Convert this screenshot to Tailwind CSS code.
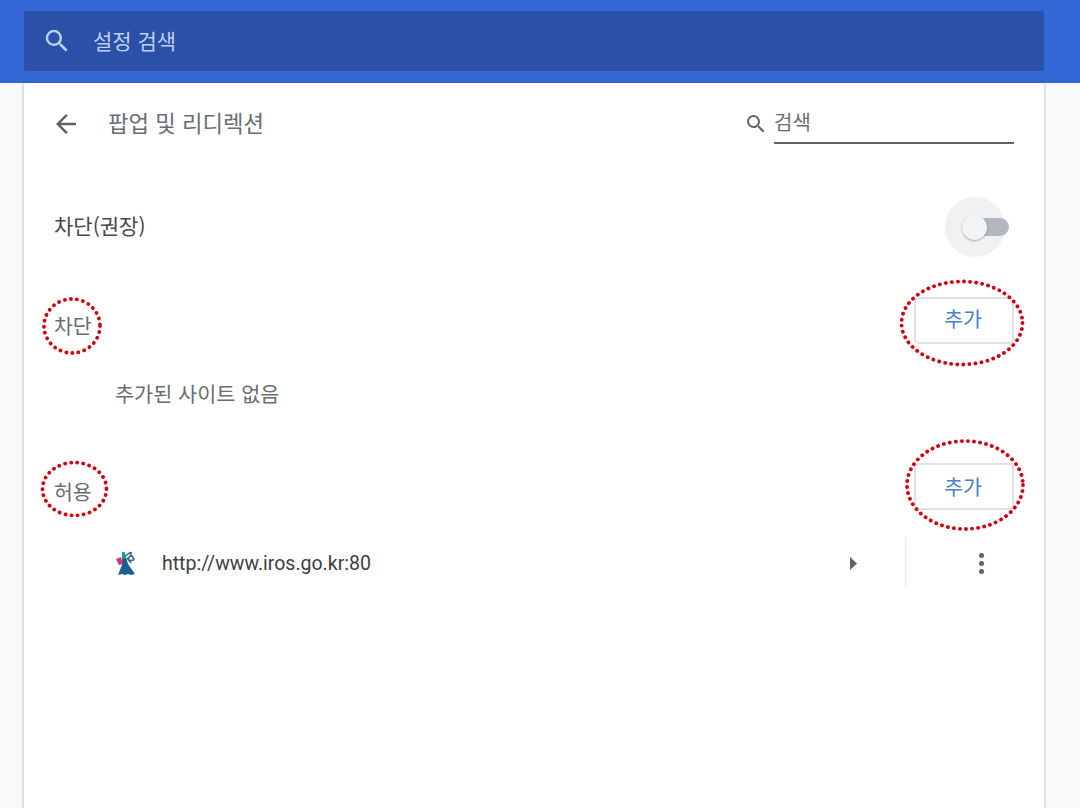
<!DOCTYPE html>
<html lang="ko">
<head>
    <meta charset="UTF-8">
    <title>팝업 및 리디렉션</title>
    <script src="https://cdn.jsdelivr.net/npm/@tailwindcss/browser@4"></script>
</head>
<body class="relative h-[808px] w-[1080px] overflow-hidden bg-[#f8f9fa] font-['Noto_Sans_CJK_KR','Roboto',sans-serif] text-[#696d72]">
    <!-- top bar -->
    <header class="h-[83px] bg-[#3367d6] pt-[11px] pr-9 pl-6">
        <div class="flex h-[60px] items-center rounded-[3px] bg-[#2a50a7] pl-[18px]">
            <svg class="h-[30px] w-[30px] fill-[#bed0f2]" viewBox="0 0 24 24"><path d="M15.5 14h-.79l-.28-.27A6.47 6.47 0 0 0 16 9.5 6.5 6.5 0 1 0 9.5 16c1.61 0 3.09-.59 4.23-1.57l.27.28v.79l5 4.99L20.49 19l-4.99-5zm-6 0C7.01 14 5 11.99 5 9.5S7.01 5 9.5 5 14 7.01 14 9.5 11.99 14 9.5 14z"/></svg>
            <span class="mb-[2px] ml-[21px] text-[21px] leading-none text-[#bed0f2]">설정 검색</span>
        </div>
    </header>

    <!-- settings card -->
    <main class="mr-9 ml-6 h-[725px] bg-white px-[30px] shadow-[0_0_3px_rgba(60,64,67,0.45)]">
        <div class="flex h-[82px] items-center">
            <svg class="-ml-[3px] h-[30px] w-[30px] fill-[#5f6368]" viewBox="0 0 24 24"><path d="M20 11H7.83l5.59-5.59L12 4l-8 8 8 8 1.41-1.41L7.83 13H20v-2z"/></svg>
            <h1 class="mb-[4px] ml-[27px] text-[22.300px] leading-none font-normal">팝업 및 리디렉션</h1>
            <svg class="mr-[6px] ml-auto h-[24px] w-[24px] fill-[#5f6368]" viewBox="0 0 24 24"><path d="M15.5 14h-.79l-.28-.27A6.47 6.47 0 0 0 16 9.5 6.5 6.5 0 1 0 9.5 16c1.61 0 3.09-.59 4.23-1.57l.27.28v.79l5 4.99L20.49 19l-4.99-5zm-6 0C7.01 14 5 11.99 5 9.5S7.01 5 9.5 5 14 7.01 14 9.5 11.99 14 9.5 14z"/></svg>
            <div class="flex h-[40px] w-[240px] items-start border-b-2 border-[#5f6368] pt-[5px] text-[20px] leading-[26px]">검색</div>
        </div>

        <div class="mt-[32px] flex h-[60px] items-center justify-between">
            <span class="mb-[2px] text-[21px] text-[#48494c]">차단(권장)</span>
            <div class="relative mr-[9px] h-[60px] w-[60px] rounded-full bg-[#f0f1f2]">
                <div class="absolute top-[21px] left-[26px] h-[18px] w-[38px] rounded-full bg-[#b5b7bf]"></div>
                <div class="absolute top-[18px] left-[17px] h-[25px] w-[25px] rounded-full bg-[#f1f3f4] shadow-[0_1px_2px_rgba(60,64,67,0.4)]"></div>
            </div>
        </div>

        <div class="mt-[40px] flex h-[46px] items-start justify-between">
            <span class="mt-[13px] text-[20.500px] leading-[30px]">차단</span>
            <button class="h-[47px] w-[100px] rounded-[5px] border-2 border-[#dfe1e4] bg-white pr-[2px] pb-[4px] text-[20.500px] text-[#4a7fcb]">추가</button>
        </div>
        <p class="mt-[35px] ml-[61px] text-[20.750px] leading-[30px]">추가된 사이트 없음</p>

        <div class="mt-[55px] flex h-[46px] items-start justify-between">
            <span class="mt-[13px] text-[20.500px] leading-[30px]">허용</span>
            <button class="h-[47px] w-[100px] rounded-[5px] border-2 border-[#dfe1e4] bg-white pr-[2px] text-[20.500px] text-[#4a7fcb]">추가</button>
        </div>

        <div class="mt-[29px] flex h-[50px] items-center">
            <svg class="ml-[59px] h-[26px] w-[24px]" viewBox="0 0 24 26">
                <path fill="#1a5f97" d="M9 8l4-1 2 7 7 10-4 1-3-1-3 1-3-1-4 1 4-10z"/>
                <path fill="#d8327c" d="M3 9l5-2 2 7-4 1z"/>
                <path fill="#17a08c" d="M9 2h3l1 6-4 1z"/>
                <path fill="none" stroke="#2a5d8c" stroke-width="1.4" d="M12 6l6-4M18 2v4M15 9l2-3h2l2 3c0 2-6 2-6 0zM18 13l-4-5"/>
            </svg>
            <span class="mt-[2px] ml-[25px] font-['Roboto',sans-serif] text-[19.500px] text-[#3c4043]">http://www.iros.go.kr:80</span>
            <svg class="ml-auto h-[13px] w-[7px] fill-[#5f6368]" viewBox="0 0 7 13"><path d="M0 0l7 6.5-7 6.5z"/></svg>
            <div class="ml-[48px] h-[50px] w-px bg-[#e8eaed]"></div>
            <div class="mr-[30px] ml-[73px] flex flex-col gap-[3px]">
                <i class="block h-[5px] w-[5px] rounded-full bg-[#5f6368]"></i>
                <i class="block h-[5px] w-[5px] rounded-full bg-[#5f6368]"></i>
                <i class="block h-[5px] w-[5px] rounded-full bg-[#5f6368]"></i>
            </div>
        </div>
    </main>

    <!-- red dotted annotations drawn over the page -->
    <svg class="pointer-events-none absolute inset-0 h-[808px] w-[1080px]" viewBox="0 0 1080 808" fill="none" stroke="#d6000c" stroke-width="3.800" stroke-linecap="round" stroke-dasharray="0.1 6">
        <ellipse cx="72" cy="326" rx="28" ry="27"/>
        <ellipse cx="962" cy="323" rx="60.500" ry="41.500"/>
        <ellipse cx="74.500" cy="489" rx="32" ry="26.500"/>
        <ellipse cx="965" cy="485" rx="58" ry="44"/>
    </svg>
</body>
</html>
